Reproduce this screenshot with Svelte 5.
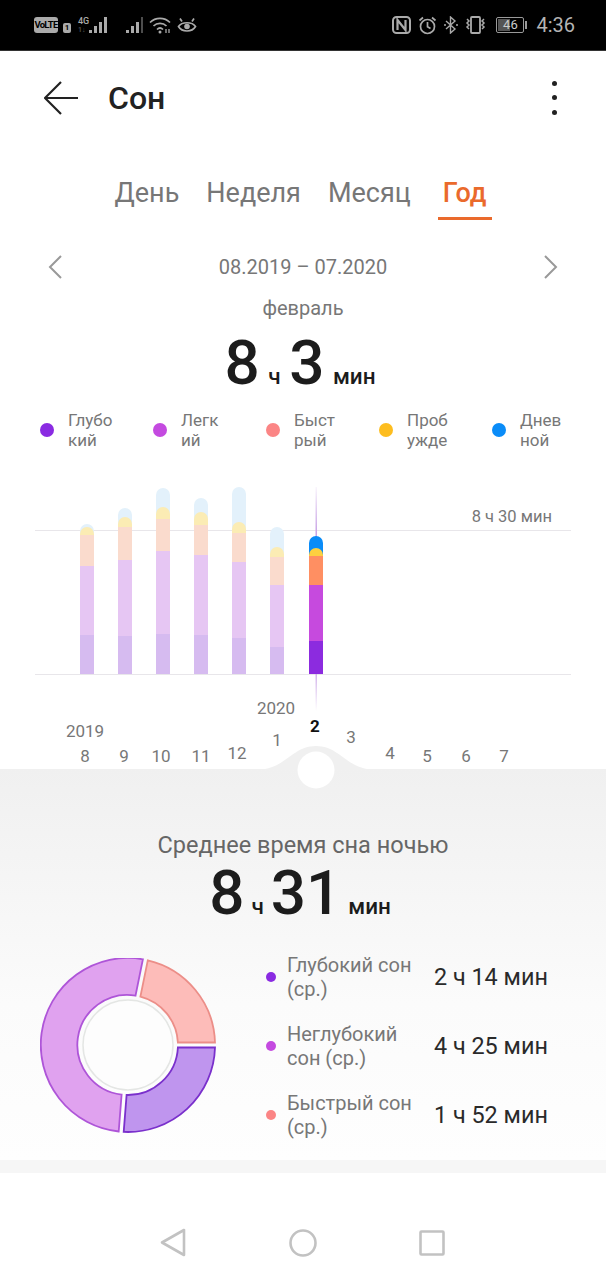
<script>
	const tabs = ['День', 'Неделя', 'Месяц', 'Год'];

	const legend = [
		{ color: '#8a2be2', text: ['Глубо', 'кий'] },
		{ color: '#c44ae0', text: ['Легк', 'ий'] },
		{ color: '#fb8585', text: ['Быст', 'рый'] },
		{ color: '#fdbd1f', text: ['Проб', 'ужде'] },
		{ color: '#0a8cf8', text: ['Днев', 'ной'] }
	];

	// chart origin is y=480 of the page; values are tops of each stacked segment
	const bars = [
		{ x: 80, tops: [44, 47, 55, 86, 155] },
		{ x: 118, tops: [28, 37, 47, 80, 156] },
		{ x: 156, tops: [8, 27, 39, 71, 154] },
		{ x: 194, tops: [18, 32, 45, 75, 155] },
		{ x: 232, tops: [7, 42, 53, 82, 158] },
		{ x: 270, tops: [47, 67, 77, 105, 167] },
		{ x: 309, tops: [56, 68, 76, 105, 161], active: true }
	];
	const faded = { blue: '#e3f1fb', yellow: '#fbecb4', peach: '#fadbcd', light: '#e6c6f3', deep: '#d6bbf0' };
	const solid = { blue: '#0a8cf8', yellow: '#fdd040', peach: '#ff8f62', light: '#c64ade', deep: '#8c2bdf' };

	function segments(bar) {
		const names = ['blue', 'yellow', 'peach', 'light', 'deep'];
		const colors = bar.active ? solid : faded;
		return names.map((name, i) => ({ color: colors[name], top: bar.tops[i], round: i < 2 }));
	}

	const ticks = [
		{ x: 85, y: 282, t: '8' }, { x: 124, y: 282, t: '9' }, { x: 161, y: 282, t: '10' },
		{ x: 201, y: 282, t: '11' }, { x: 237, y: 279, t: '12' }, { x: 277, y: 266, t: '1' },
		{ x: 351, y: 263, t: '3' }, { x: 390, y: 279, t: '4' }, { x: 427, y: 282, t: '5' },
		{ x: 466, y: 282, t: '6' }, { x: 504, y: 282, t: '7' },
		{ x: 85, y: 257, t: '2019' }, { x: 276, y: 234, t: '2020' }
	];

	const cx = 88, cy = 87, R = 87, r = 50;
	function wedge(a0, a1) {
		const gap = 2.5;
		const pt = (rad, deg) => {
			const a = ((deg - 90) * Math.PI) / 180;
			return (cx + rad * Math.cos(a)).toFixed(1) + ' ' + (cy + rad * Math.sin(a)).toFixed(1);
		};
		const off = (rad) => (Math.asin(gap / rad) * 180) / Math.PI;
		const large = a1 - a0 > 180 ? 1 : 0;
		return `M${pt(R, a0 + off(R))}A${R} ${R} 0 ${large} 1 ${pt(R, a1 - off(R))}L${pt(r, a1 - off(r))}A${r} ${r} 0 ${large} 0 ${pt(r, a0 + off(r))}Z`;
	}
	const donut = [
		{ d: wedge(90, 184.5), fill: '#bf95ee', stroke: '#7a30cc' },
		{ d: wedge(184.5, 371.5), fill: '#e0a2ef', stroke: '#ae55d8' },
		{ d: wedge(371.5, 450), fill: '#fdbcb9', stroke: '#ec8e88' }
	];

	const stats = [
		{ color: '#8a2be2', text: ['Глубокий сон', '(ср.)'], value: '2 ч 14 мин' },
		{ color: '#c44ae0', text: ['Неглубокий', 'сон (ср.)'], value: '4 ч 25 мин' },
		{ color: '#fb8585', text: ['Быстрый сон', '(ср.)'], value: '1 ч 52 мин' }
	];
</script>

<div class="phone">
	<div class="status">
		<div class="status-left">
			<span class="volte">VoLTE</span>
			<span class="sim">1</span>
			<span class="net">4G<em>1↓</em></span>
			<svg class="signal" width="20" height="18" viewBox="0 0 20 18"><path d="M1 14h3v3H1zM6 10h3v7H6zM11 6h3v11h-3zM16 1h3v16h-3z" /></svg>
			<svg class="signal second" width="20" height="18" viewBox="0 0 20 18"><path d="M1 14h3v3H1zM6 10h3v7H6zM11 6h3v11h-3z" /><path d="M16 1h2v16h-2z" opacity=".45" /></svg>
			<svg class="wifi" width="23" height="18" viewBox="0 0 23 18" fill="none" stroke="#aaa" stroke-width="1.7"><path d="M1 6.500C6.500 1 15.500 1 21 6.500M4.500 10C8 6.500 14 6.500 17.500 10M8 13.500c2-2 4-2 6 0" /><circle cx="11" cy="16" r="1.500" fill="#aaa" stroke="none" /><path d="M17 13v4M20 13v4" stroke-width="1.300" /></svg>
			<svg class="eye" width="20" height="17" viewBox="0 0 20 17" fill="none" stroke="#aaa" stroke-width="1.700"><path d="M1.500 9.500C5 4.500 15 4.500 18.500 9.500 15 15.500 5 15.500 1.500 9.500Z" /><circle cx="10" cy="9.500" r="2.800" fill="#aaa" stroke="none" /><path d="M3 1.500 5 4.500M17 1.500 15 4.500" /></svg>
		</div>
		<div class="status-right">
			<svg width="19" height="18" viewBox="0 0 19 18" fill="none" stroke="#aaa"><rect x="1" y="1" width="17" height="16" rx="3.500" stroke-width="2" /><path d="M5.500 14V4l8 10V4" stroke-width="2.200" /></svg>
			<svg class="clock" width="19" height="19" viewBox="0 0 19 19" fill="none" stroke="#aaa" stroke-width="1.700"><circle cx="9.500" cy="10.500" r="7" /><path d="M9.500 6v4.800l3 1.800M1.500 4.500 5 1.500M17.500 4.500 14 1.500" /></svg>
			<svg class="bt" width="14" height="18" viewBox="0 0 14 18" fill="none" stroke="#aaa" stroke-width="1.400"><path d="M2 5l9 8-4.500 4V1L11 5l-9 8" /><path d="M0 9h2M12 9h2" /></svg>
			<svg class="vib" width="23" height="18" viewBox="0 0 23 18" fill="none" stroke="#aaa" stroke-width="1.500"><rect x="7" y="1" width="9" height="16" rx="1" stroke-width="1.800" /><path d="M3 3l2 2-2 2 2 2-2 2 2 2M20 3l-2 2 2 2-2 2 2 2-2 2" /></svg>
			<div class="battery">
				<div class="cell"><div class="charge"></div><span>46</span></div>
				<div class="nub"></div>
			</div>
			<span class="time">4:36</span>
		</div>
	</div>

	<header class="appbar">
		<svg width="34" height="34" viewBox="0 0 34 34" fill="none" stroke="#222" stroke-width="2.200"><path d="M17 1 1 17l16 16M1 17h33" /></svg>
		<h1>Сон</h1>
		<div class="more"><i></i><i></i><i></i></div>
	</header>

	<nav class="tabs">
		{#each tabs as tab, i}
			<span class="tab" class:active={i === 3}>{tab}</span>
		{/each}
	</nav>

	<div class="range">
		<svg width="14" height="24" viewBox="0 0 14 24" fill="none" stroke="#999" stroke-width="2"><path d="M13 1 2 12l11 11" /></svg>
		<span>08.2019 – 07.2020</span>
		<svg width="14" height="24" viewBox="0 0 14 24" fill="none" stroke="#999" stroke-width="2"><path d="M1 1l11 11L1 23" /></svg>
	</div>

	<div class="month">февраль</div>
	<div class="big total"><b>8</b><small>ч</small><b>3</b><small>мин</small></div>

	<div class="legend">
		{#each legend as item}
			<div class="legend-item">
				<span class="dot" style="background: {item.color}"></span>
				<span class="legend-text">{item.text[0]}<br />{item.text[1]}</span>
			</div>
		{/each}
	</div>

	<svg class="chart" width="606" height="289" viewBox="0 0 606 289">
		<defs>
			<linearGradient id="marker" x1="0" y1="0" x2="0" y2="1">
				<stop offset="0" stop-color="#c9a4e6" stop-opacity="0.1" />
				<stop offset="0.2" stop-color="#c9a4e6" />
				<stop offset="0.8" stop-color="#c9a4e6" />
				<stop offset="1" stop-color="#c9a4e6" stop-opacity="0" />
			</linearGradient>
		</defs>
		<path d="M35 50.500H571M35 194.500H571" stroke="#e8e6ea" />
		<rect x="315.500" y="7" width="1.500" height="224" fill="url(#marker)" />
		{#each bars as bar}
			{#each segments(bar) as seg}
				<path
					d={seg.round
						? `M${bar.x} 194V${seg.top + 7}a7 7 0 0 1 14 0V194Z`
						: `M${bar.x} 194V${seg.top}h14V194Z`}
					fill={seg.color}
				/>
			{/each}
		{/each}
		<text class="axis-note" x="552" y="42" text-anchor="end">8 ч 30 мин</text>
		{#each ticks as tick}
			<text class="tick" x={tick.x} y={tick.y} text-anchor="middle">{tick.t}</text>
		{/each}
		<text class="tick current" x="315" y="252" text-anchor="middle">2</text>
		<path d="M258 289.500C285 289.500 292 266 316 266S347 289.500 374 289.500Z" fill="#f0f0f0" />
		<circle cx="316" cy="290" r="18.500" fill="#fff" />
	</svg>

	<section class="average">
		<h2>Среднее время сна ночью</h2>
		<div class="big mean"><b>8</b><small>ч</small><b>31</b><small>мин</small></div>
		<div class="average-body">
			<svg class="donut" width="176" height="176" viewBox="0 0 176 176">
				{#each donut as part}
					<path d={part.d} fill={part.fill} stroke={part.stroke} stroke-width="1.800" />
				{/each}
				<circle cx={cx} cy={cy} r="45" fill="#fdfdfd" stroke="#e4e6e4" stroke-width="1.500" />
			</svg>
			<div class="stats">
				{#each stats as row}
					<div class="stat">
						<span class="stat-dot" style="background: {row.color}"></span>
						<span class="stat-label">{row.text[0]}<br />{row.text[1]}</span>
						<span class="stat-value">{row.value}</span>
					</div>
				{/each}
			</div>
		</div>
	</section>
	<div class="band"></div>

	<div class="navbar">
		<svg width="26" height="29" viewBox="0 0 26 29" fill="none" stroke="#c2c2c2" stroke-width="2.600" stroke-linejoin="round"><path d="M24 2v25L2 14.500Z" /></svg>
		<svg width="28" height="28" viewBox="0 0 28 28" fill="none" stroke="#c2c2c2" stroke-width="2.600"><circle cx="14" cy="14" r="12.500" /></svg>
		<svg width="26" height="26" viewBox="0 0 26 26" fill="none" stroke="#c2c2c2" stroke-width="2.600" stroke-linejoin="round"><rect x="1.500" y="1.500" width="23" height="23" rx="1" /></svg>
	</div>
</div>

<style>
	:global(body) {
		background: #fff;
	}

	.phone {
		width: 606px;
		height: 1280px;
		overflow: hidden;
		font-family: Roboto, 'Noto Sans', sans-serif;
		color: #777;
	}

	.status {
		height: 51px;
		background: #000;
		border-bottom: 1px solid #333;
		box-sizing: border-box;
		display: flex;
		align-items: center;
		justify-content: space-between;
		padding: 0 31px 0 34px;
		color: #aaa;
	}

	.status-left,
	.status-right {
		display: flex;
		align-items: center;
	}

	.signal {
		fill: #aaa;
	}

	.volte {
		width: 24px;
		height: 16px;
		background: #aaa;
		color: #000;
		border-radius: 3px;
		font: 700 9.500px/16px Roboto, sans-serif;
		letter-spacing: -0.7px;
		text-align: center;
	}

	.sim {
		width: 8px;
		height: 10px;
		margin: 6px 0 0 5px;
		background: #aaa;
		color: #000;
		border-radius: 2px;
		font: 700 8px/10px Roboto, sans-serif;
		text-align: center;
	}

	.net {
		margin-left: 7px;
		width: 10px;
		display: flex;
		flex-direction: column;
		font-size: 9px;
		line-height: 9px;
		font-weight: 500;
	}

	.net em {
		font-style: normal;
		font-size: 7px;
		line-height: 8px;
		color: #555;
	}

	.signal.second {
		margin-left: 17px;
	}

	.wifi {
		margin-left: 4px;
	}

	.eye {
		margin-left: 5px;
	}

	.clock {
		margin-left: 7px;
	}

	.bt {
		margin-left: 7px;
	}

	.vib {
		margin-left: 6px;
	}

	.battery {
		display: flex;
		align-items: center;
		margin-left: 9px;
	}

	.cell {
		position: relative;
		width: 28px;
		height: 16px;
		box-sizing: border-box;
		border: 1px solid #999;
		border-radius: 2px;
		text-align: center;
		font-size: 13px;
		line-height: 14px;
		color: #ccc;
	}

	.charge {
		position: absolute;
		inset: 1px 13px 1px 1px;
		background: #555;
	}

	.cell span {
		position: relative;
	}

	.nub {
		width: 2px;
		height: 8px;
		margin-left: 1px;
		background: #999;
	}

	.time {
		margin-left: 9px;
		font-size: 20px;
		color: #b4b4b4;
	}

	.appbar {
		height: 99px;
		display: flex;
		align-items: center;
		padding: 0 0 6px 44px;
		box-sizing: border-box;
		color: #222;
	}

	.appbar h1 {
		flex: 1;
		margin: 0 0 0 30px;
		font-size: 32px;
		font-weight: 500;
	}

	.more {
		display: flex;
		flex-direction: column;
		gap: 9.500px;
		margin-right: 49px;
	}

	.more i {
		width: 5px;
		height: 5px;
		border-radius: 50%;
		background: #222;
	}

	.tabs {
		height: 72px;
		display: flex;
		justify-content: center;
		gap: 27px;
		box-sizing: border-box;
		padding-top: 27px;
		font-size: 27px;
	}

	.tab {
		height: 43px;
		line-height: 32px;
		box-sizing: border-box;
	}

	.tab.active {
		padding: 0 5px;
		color: #ea6a2c;
		font-weight: 500;
		border-bottom: 3px solid #ea6a2c;
	}

	.range {
		height: 46px;
		margin-top: 22px;
		display: flex;
		align-items: center;
		justify-content: space-between;
		padding: 0 48px;
		font-size: 20px;
		box-sizing: border-box;
	}

	.month {
		height: 36px;
		line-height: 36px;
		text-align: center;
		font-size: 20px;
	}

	.big {
		display: flex;
		justify-content: center;
		align-items: baseline;
		color: #1c1c1c;
	}

	.big b {
		font-size: 62px;
		font-weight: 500;
	}

	.big small {
		font-size: 22.500px;
		font-weight: 500;
		margin: 0 7px;
	}

	.big small:last-child {
		margin-right: 0;
	}

	.total {
		height: 66px;
		line-height: 66px;
		margin-top: 4px;
		padding-right: 6px;
	}

	.total small {
		margin: 0 8.500px;
	}

	.legend {
		height: 84px;
		display: flex;
		padding: 14px 0 0 40px;
		box-sizing: border-box;
	}

	.legend-item {
		width: 113px;
		height: 40px;
		display: flex;
		align-items: center;
		gap: 14px;
		font-size: 17px;
		line-height: 20px;
	}

	.dot {
		width: 14px;
		height: 14px;
		border-radius: 50%;
	}

	.chart {
		display: block;
		overflow: visible;
		position: relative;
		z-index: 1;
	}

	.axis-note {
		font-size: 16.500px;
		fill: #777;
	}

	.tick {
		font-size: 17px;
		fill: #777;
	}

	.tick.current {
		font-weight: 700;
		fill: #111;
	}

	.average {
		height: 391px;
		box-sizing: border-box;
		padding-top: 60px;
		background: linear-gradient(#f0f0f0, #fbfbfb 60%, #fefefe);
	}

	.average h2 {
		margin: 0;
		font-size: 23.500px;
		font-weight: 400;
		line-height: 32px;
		text-align: center;
		color: #666;
	}

	.mean {
		height: 64px;
		line-height: 64px;
		padding-right: 6px;
	}

	.average-body {
		display: flex;
		margin-top: 33px;
		padding-left: 40px;
	}

	.stats {
		margin-left: 50px;
		display: flex;
		flex-direction: column;
		gap: 21px;
		margin-top: -5px;
	}

	.stat {
		height: 48px;
		display: flex;
		align-items: center;
	}

	.stat-dot {
		width: 10px;
		height: 10px;
		border-radius: 50%;
	}

	.stat-label {
		width: 147px;
		margin-left: 11px;
		font-size: 20px;
		line-height: 24px;
	}

	.stat-value {
		font-size: 23.400px;
		color: #2a2a2a;
	}

	.band {
		height: 13px;
		background: #f6f6f6;
	}

	.navbar {
		height: 107px;
		display: flex;
		align-items: center;
		box-sizing: border-box;
		padding: 32px 0 0 160px;
		gap: 102.500px;
	}
</style>
